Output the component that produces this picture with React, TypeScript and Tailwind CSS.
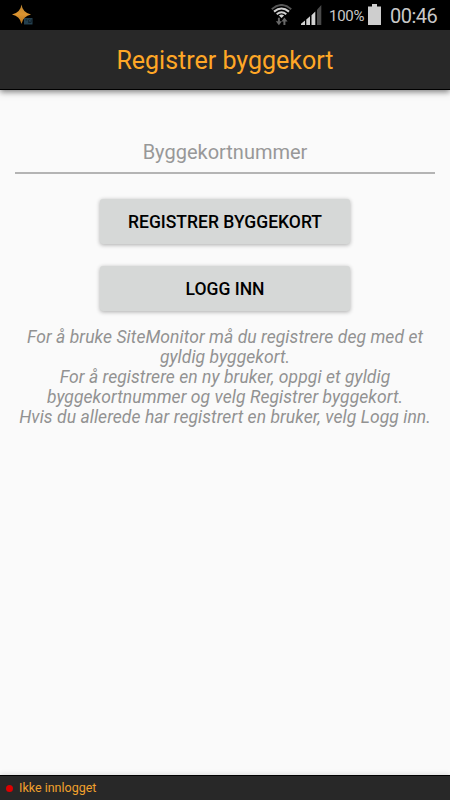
import { useState } from 'react'

const helpLines = [
  'For å bruke SiteMonitor må du registrere deg med et',
  'gyldig byggekort.',
  'For å registrere en ny bruker, oppgi et gyldig',
  'byggekortnummer og velg Registrer byggekort.',
  'Hvis du allerede har registrert en bruker, velg Logg inn.',
]

function SparkIcon() {
  return (
    <svg className="w-[22px] h-[22px]" viewBox="0 0 22 22">
      <defs>
        <linearGradient id="spark" x1="0" y1="0" x2="0" y2="1">
          <stop offset="0" stopColor="#b9832f" />
          <stop offset="0.5" stopColor="#dc9430" />
          <stop offset="1" stopColor="#b0701c" />
        </linearGradient>
      </defs>
      <path d="M9.5 0.5 Q10.5 8.5 19 10.5 Q11 12 9.5 20 Q8 12 0 10.5 Q8.5 8.5 9.5 0.5Z" fill="url(#spark)" />
      <rect x="12" y="14" width="8.5" height="6.5" fill="#24404f" />
      <path d="M13.6 16h1.3M17.4 15.4l-1.2 1.4 1.4 1.6M19.2 15.4v3h-3" fill="none" stroke="#101c24" strokeWidth="0.9" />
    </svg>
  )
}

function WifiIcon() {
  return (
    <svg className="w-[21px] h-[22px]" viewBox="0 0 21 22" fill="none">
      <path d="M0.8 5.2Q10.5 -3.2 20.2 5.2" stroke="#565656" strokeWidth="2" />
      <path d="M3 7.6Q10.5 1.4 18 7.6" stroke="#d0d0d0" strokeWidth="2.1" />
      <path d="M5.7 10.2Q10.5 6.2 15.3 10.2" stroke="#d0d0d0" strokeWidth="2" />
      <path d="M7.9 11.5Q10.5 9.6 13.1 11.5L10.5 14Z" fill="#d0d0d0" />
      <path d="M7.9 13.8v4.5M13.4 21v-4.5" stroke="#686868" strokeWidth="2" />
      <path d="M4.8 17.3h6.2l-3.1 4zM10.4 17.6h6.2L13.4 13.6z" fill="#686868" />
    </svg>
  )
}

function SignalIcon() {
  return (
    <svg className="w-[21px] h-[20px]" viewBox="0 0 21 20">
      <path d="M0 20v-1.2L4 15.4V20zM5.3 20v-5.5L9 11.3V20zM10.5 20v-9.8l3.8-3.8V20z" fill="#d2d2d2" />
      <path d="M16 20V4.8L20.3 0V20z" fill="#4a4a4a" />
    </svg>
  )
}

function BatteryIcon() {
  return (
    <svg className="w-[13px] h-[21px]" viewBox="0 0 13 21">
      <path d="M4 0h5v2.5h4V21H0V2.5h4z" fill="#cecece" />
    </svg>
  )
}

function StatusBar() {
  return (
    <div className="h-[30px] shrink-0 bg-black flex items-start text-[#c8c8c8]">
      <div className="pl-3 pt-[4px]">
        <SparkIcon />
      </div>
      <div className="ml-auto flex items-start pr-3">
        <div className="mt-[4px] mr-[9px]">
          <WifiIcon />
        </div>
        <div className="mt-[5px]">
          <SignalIcon />
        </div>
        <span className="w-[36px] ml-[7px] mt-[6px] text-[15px] leading-[20px] tracking-[-0.3px] whitespace-nowrap">100%</span>
        <div className="mt-[4px] ml-[3px] mr-[9px]">
          <BatteryIcon />
        </div>
        <span className="w-[48px] text-[20px] leading-[24px] tracking-[-0.5px] mt-[4px] whitespace-nowrap">00:46</span>
      </div>
    </div>
  )
}

export default function App() {
  const [cardNumber, setCardNumber] = useState('')

  const buttonClass =
    'w-[250px] h-[45px] rounded-[3px] bg-[#d6d8d7] text-black text-[17.5px] font-medium uppercase leading-[20px] shadow-[0_1px_4px_rgba(0,0,0,0.32)]'

  return (
    <div className="h-screen flex flex-col overflow-hidden bg-[#fafafa] font-['Roboto',sans-serif]">
      <StatusBar />
      <header className="relative h-[60px] shrink-0 flex items-center justify-center pt-[2px] bg-[#282828] border-b border-black shadow-[0_2px_6px_rgba(0,0,0,0.5)]">
        <h1 className="text-[25px] leading-[30px] text-[#ffa726] whitespace-nowrap">Registrer byggekort</h1>
      </header>

      <main className="flex-1 flex flex-col items-center px-[15px] pt-[41px]">
        <input
          value={cardNumber}
          onChange={(e) => setCardNumber(e.target.value)}
          placeholder="Byggekortnummer"
          className="w-full h-[43px] border-b-2 border-[#b4b4b4] text-center text-[20px] text-black placeholder:text-[#989898] outline-none"
        />
        <button className={`${buttonClass} mt-[25px]`}>Registrer byggekort</button>
        <button className={`${buttonClass} mt-[22px]`}>Logg inn</button>
        <div className="mt-[16px] text-center text-[17.5px] leading-[20px] tracking-[0.06px] italic text-[#929292] whitespace-nowrap">
          {helpLines.map((line) => (
            <p key={line}>{line}</p>
          ))}
        </div>
      </main>

      <footer className="relative h-[25px] shrink-0 flex items-center pl-[6px] bg-[#282828] border-t border-black shadow-[0_-1px_5px_rgba(0,0,0,0.12)]">
        <span className="w-[7px] h-[7px] rounded-full bg-[#dc0000]" />
        <span className="ml-[6px] text-[12.5px] leading-[16px] text-[#f0a02c]">Ikke innlogget</span>
      </footer>
    </div>
  )
}
